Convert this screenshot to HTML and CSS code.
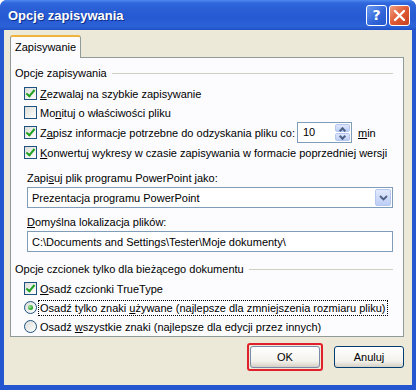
FILE: index.html
```html
<!DOCTYPE html>
<html lang="pl">
<head>
  <meta charset="UTF-8" />
  <title>Opcje zapisywania</title>
  <link rel="stylesheet" href="styles.css">
</head>
<body>
  <div class="window">
    <div class="titlebar">
      <span class="title">Opcje zapisywania</span>
      <div class="caption-buttons">
        <button class="cap help">?</button>
        <button class="cap close">
          <svg width="13" height="13" viewBox="0 0 13 13"><path d="M2 2 L11 11 M11 2 L2 11" stroke="#fff" stroke-width="2.4" stroke-linecap="round"/></svg>
        </button>
      </div>
    </div>

    <div class="client">
      <div class="tabs">
        <div class="tab active">Zapisywanie</div>
      </div>

      <div class="panel">
        <div class="legend"><span>Opcje zapisywania</span></div>
        <div class="options">
          <label class="row">
            <span class="box checked"></span>
            <span><u>Z</u>ezwalaj na szybkie zapisywanie</span>
          </label>
          <label class="row">
            <span class="box"></span>
            <span>Mo<u>n</u>ituj o właściwości pliku</span>
          </label>
          <label class="row tall">
            <span class="box checked"></span>
            <span class="grow">Z<u>a</u>pisz informacje potrzebne do odzyskania pliku co:</span>
            <span class="spinner">
              <span class="spin-value">10</span>
              <span class="spin-btns">
                <span class="spin-btn up"></span>
                <span class="spin-btn down"></span>
              </span>
            </span>
            <span class="unit"><u>m</u>in</span>
          </label>
          <label class="row">
            <span class="box checked"></span>
            <span><u>K</u>onwertuj wykresy w czasie zapisywania w formacie poprzedniej wersji</span>
          </label>
        </div>

        <div class="field-label first">Zapi<u>s</u>uj plik programu PowerPoint jako:</div>
        <div class="select">
          <span class="select-value">Prezentacja programu PowerPoint</span>
          <span class="select-btn">
            <svg width="9" height="6" viewBox="0 0 9 6"><path d="M1 1 L4.5 4.5 L8 1" fill="none" stroke="#4d6185" stroke-width="1.8"/></svg>
          </span>
        </div>

        <div class="field-label"><u>D</u>omyślna lokalizacja plików:</div>
        <div class="textbox">C:\Documents and Settings\Tester\Moje dokumenty\</div>

        <div class="legend second"><span>Opcje czcionek tylko dla bieżącego dokumentu</span></div>
        <div class="options">
          <label class="row">
            <span class="box checked"></span>
            <span><u>O</u>sadź czcionki TrueType</span>
          </label>
          <label class="row">
            <span class="radio selected"></span>
            <span class="focus">Osadź tylko znaki <u>u</u>żywane (najlepsze dla zmniejszenia rozmiaru pliku)</span>
          </label>
          <label class="row">
            <span class="radio"></span>
            <span>Osadź <u>w</u>szystkie znaki (najlepsze dla edycji przez innych)</span>
          </label>
        </div>
      </div>

      <div class="buttons">
        <span class="highlight"><button class="btn">OK</button></span>
        <button class="btn">Anuluj</button>
      </div>
    </div>
  </div>
</body>
</html>
```

FILE: styles.css
```css
:root {
  --face: #ece9d8;
  --frame: #2456d0;
  --edge: #7f9db9;
  --tab-border: #919b9c;
  --check: #1c5180;
  --text: #000;
}

body {
  margin: 0;
  background: #fff;
  font-family: 'Liberation Sans', Arial, sans-serif;
  font-size: 11px;
  color: var(--text);
}

u {
  text-decoration: underline;
  text-underline-offset: 1px;
}

.window {
  width: 416px;
  height: 390px;
  box-sizing: border-box;
  display: flex;
  flex-direction: column;
  background: var(--frame);
  border-radius: 7px 7px 0 0;
  overflow: hidden;
}

/* title bar */

.titlebar {
  height: 30px;
  flex: none;
  display: flex;
  align-items: center;
  justify-content: space-between;
  padding: 0 6px 0 8px;
  background: linear-gradient(#4f8af0 0, #3067dd 3px, #2a5fd6 9px, #2659d2 60%, #2c62d8 88%, #2050c4 100%);
}

.title {
  color: #fff;
  font-weight: bold;
  font-size: 13px;
  text-shadow: 1px 1px 0 #0c2f8a;
}

.caption-buttons {
  display: flex;
  gap: 2px;
}

.cap {
  width: 21px;
  height: 21px;
  padding: 0;
  border: 1px solid #fff;
  border-radius: 3px;
  display: flex;
  align-items: center;
  justify-content: center;
  color: #fff;
  font-family: 'DejaVu Sans', sans-serif;
  font-weight: bold;
  font-size: 14px;
}

.help {
  background: linear-gradient(135deg, #6b9af0, #2f63d8 60%, #2558cc);
}

.close {
  background: linear-gradient(135deg, #f0a080, #e05a35 50%, #c8401e);
}

/* client area */

.client {
  flex: 1;
  margin: 0 4px 5px;
  background: var(--face);
  padding: 5px 8px 0 6px;
}

.tabs {
  display: flex;
  height: 23px;
}

.tab {
  padding: 0 4px;
  line-height: 21px;
  background: #fcfcfe;
  border: 1px solid var(--tab-border);
  border-bottom: none;
  border-top: 2px solid #f0b43c;
  border-radius: 3px 3px 0 0;
  position: relative;
  z-index: 1;
  height: 21px;
}

.panel {
  height: 280px;
  box-sizing: border-box;
  margin-top: -1px;
  background: #fcfcfe;
  border: 1px solid var(--tab-border);
  padding: 7px 10px 0 4px;
}

.legend {
  display: flex;
  align-items: center;
  gap: 5px;
  height: 16px;
}

.legend::after {
  content: '';
  flex: 1;
  border-top: 1px solid #d0d0bf;
  margin-top: 1px;
}

.legend.second {
  margin-top: 9px;
}

.options {
  padding-left: 9px;
  margin-top: 3px;
}

.second + .options {
  margin-top: 2px;
}

.row {
  display: flex;
  align-items: center;
  height: 19px;
  white-space: nowrap;
}

.row.tall {
  height: 21px;
}

.box, .radio {
  width: 13px;
  height: 13px;
  box-sizing: border-box;
  flex: none;
  margin-right: 3px;
  border: 1px solid var(--check);
  background: linear-gradient(135deg, #dcdcd7, #ffffff);
  position: relative;
}

.box.checked::after {
  content: '';
  position: absolute;
  left: 3px;
  top: 0;
  width: 3px;
  height: 7px;
  border: solid #21a121;
  border-width: 0 2px 2px 0;
  transform: rotate(40deg);
}

.radio {
  border-radius: 50%;
}

.radio.selected::after {
  content: '';
  position: absolute;
  left: 3px;
  top: 3px;
  width: 5px;
  height: 5px;
  border-radius: 50%;
  background: radial-gradient(circle at 35% 35%, #9de39d, #21a121 70%);
}

.focus {
  outline: 1px dotted #000;
  outline-offset: 1px;
  padding-right: 1px;
}

.grow {
  width: 257px;
}

.spinner {
  width: 55px;
  height: 21px;
  box-sizing: border-box;
  border: 1px solid var(--edge);
  background: #fff;
  display: flex;
  align-items: stretch;
  padding: 1px;
}

.spin-value {
  flex: 1;
  padding-left: 4px;
  line-height: 17px;
}

.spin-btns {
  width: 15px;
  display: flex;
  flex-direction: column;
  gap: 1px;
}

.spin-btn {
  flex: 1;
  border-radius: 2px;
  background: linear-gradient(#dfe8fb, #bccdf5);
  border: 1px solid #b4c7f0;
  position: relative;
}

.spin-btn::after {
  content: '';
  position: absolute;
  left: 4px;
  width: 3px;
  height: 3px;
  border: solid #4d6185;
  border-width: 2px 0 0 2px;
}

.spin-btn.up::after {
  top: 3px;
  transform: rotate(45deg);
}

.spin-btn.down::after {
  top: 0;
  transform: rotate(225deg);
}

.unit {
  margin-left: 6px;
}

.field-label {
  margin-left: 12px;
  line-height: 16px;
  margin-top: 6px;
}

.field-label.first {
  margin-top: 8px;
}

.select, .textbox {
  margin: 1px 0 0 12px;
  height: 21px;
  box-sizing: border-box;
  border: 1px solid var(--edge);
  background: #fff;
  display: flex;
  align-items: center;
}

.select {
  padding: 1px;
}

.select-value {
  flex: 1;
  padding-left: 3px;
}

.select-btn {
  width: 16px;
  height: 17px;
  box-sizing: border-box;
  border: 1px solid #b4c7f0;
  border-radius: 2px;
  background: linear-gradient(#e2eafc, #bccdf5);
  display: flex;
  align-items: center;
  justify-content: center;
}

.textbox {
  padding-left: 4px;
}

/* dialog buttons */

.buttons {
  display: flex;
  justify-content: flex-end;
  align-items: center;
  gap: 11px;
  margin-top: 6px;
}

.btn {
  width: 70px;
  height: 22px;
  padding: 0;
  border: 1px solid #003c74;
  border-radius: 3px;
  background: linear-gradient(#ffffff, #f3f2ec 70%, #d6d0c5);
  font-family: inherit;
  font-size: 11px;
  color: #000;
}

.highlight {
  display: flex;
  padding: 1px;
  border: 2px solid #e0202a;
  border-radius: 3px;
}

.highlight .btn {
  border-color: #7a8aa8;
}
```
